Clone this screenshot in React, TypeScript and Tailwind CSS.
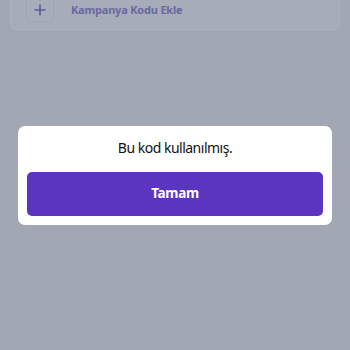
import React from 'react';

const App: React.FC = () => {
    return (
        <div
            className="relative w-[350px] h-[350px] overflow-hidden bg-[#a1a8b4]"
            style={{ fontFamily: '"Noto Sans", "Open Sans", sans-serif' }}
        >
            {/* Dimmed page behind the dialog */}
            <div className="mx-2 h-[32px] rounded-b-lg bg-[#a6acb8] border-b border-x border-[#9ea4b0] flex items-start">
                <div className="ml-[17px] -mt-[6px] w-[28px] h-[28px] rounded-md border border-[#9ea4b0] bg-[#a7adb9] flex items-center justify-center text-[#5e5c94]">
                    <svg width="12" height="12" viewBox="0 0 12 12" className="mt-[4px] -ml-[1px]">
                        <path d="M6 0.5v11M0.5 6h11" stroke="currentColor" strokeWidth="1.6" />
                    </svg>
                </div>
                <span className="ml-[17px] mt-[2px] text-[11px] font-bold tracking-[-0.2px] text-[#6b67a3]">Kampanya Kodu Ekle</span>
            </div>

            {/* Dialog */}
            <div className="fixed inset-0 flex items-center justify-center px-[18px]">
                <div className="w-full bg-white rounded-[7px] pt-[11px] px-[9px] pb-[9px]">
                    <p className="text-center text-[14px] leading-[22px] tracking-[-0.5px] text-[#111111]">Bu kod kullanılmış.</p>
                    <button className="mt-[13px] w-full h-[44px] rounded-[5px] bg-[#5b35c0] text-white text-[13.5px] tracking-[-0.3px] font-bold">
                        Tamam
                    </button>
                </div>
            </div>
        </div>
    );
};

export default App;
